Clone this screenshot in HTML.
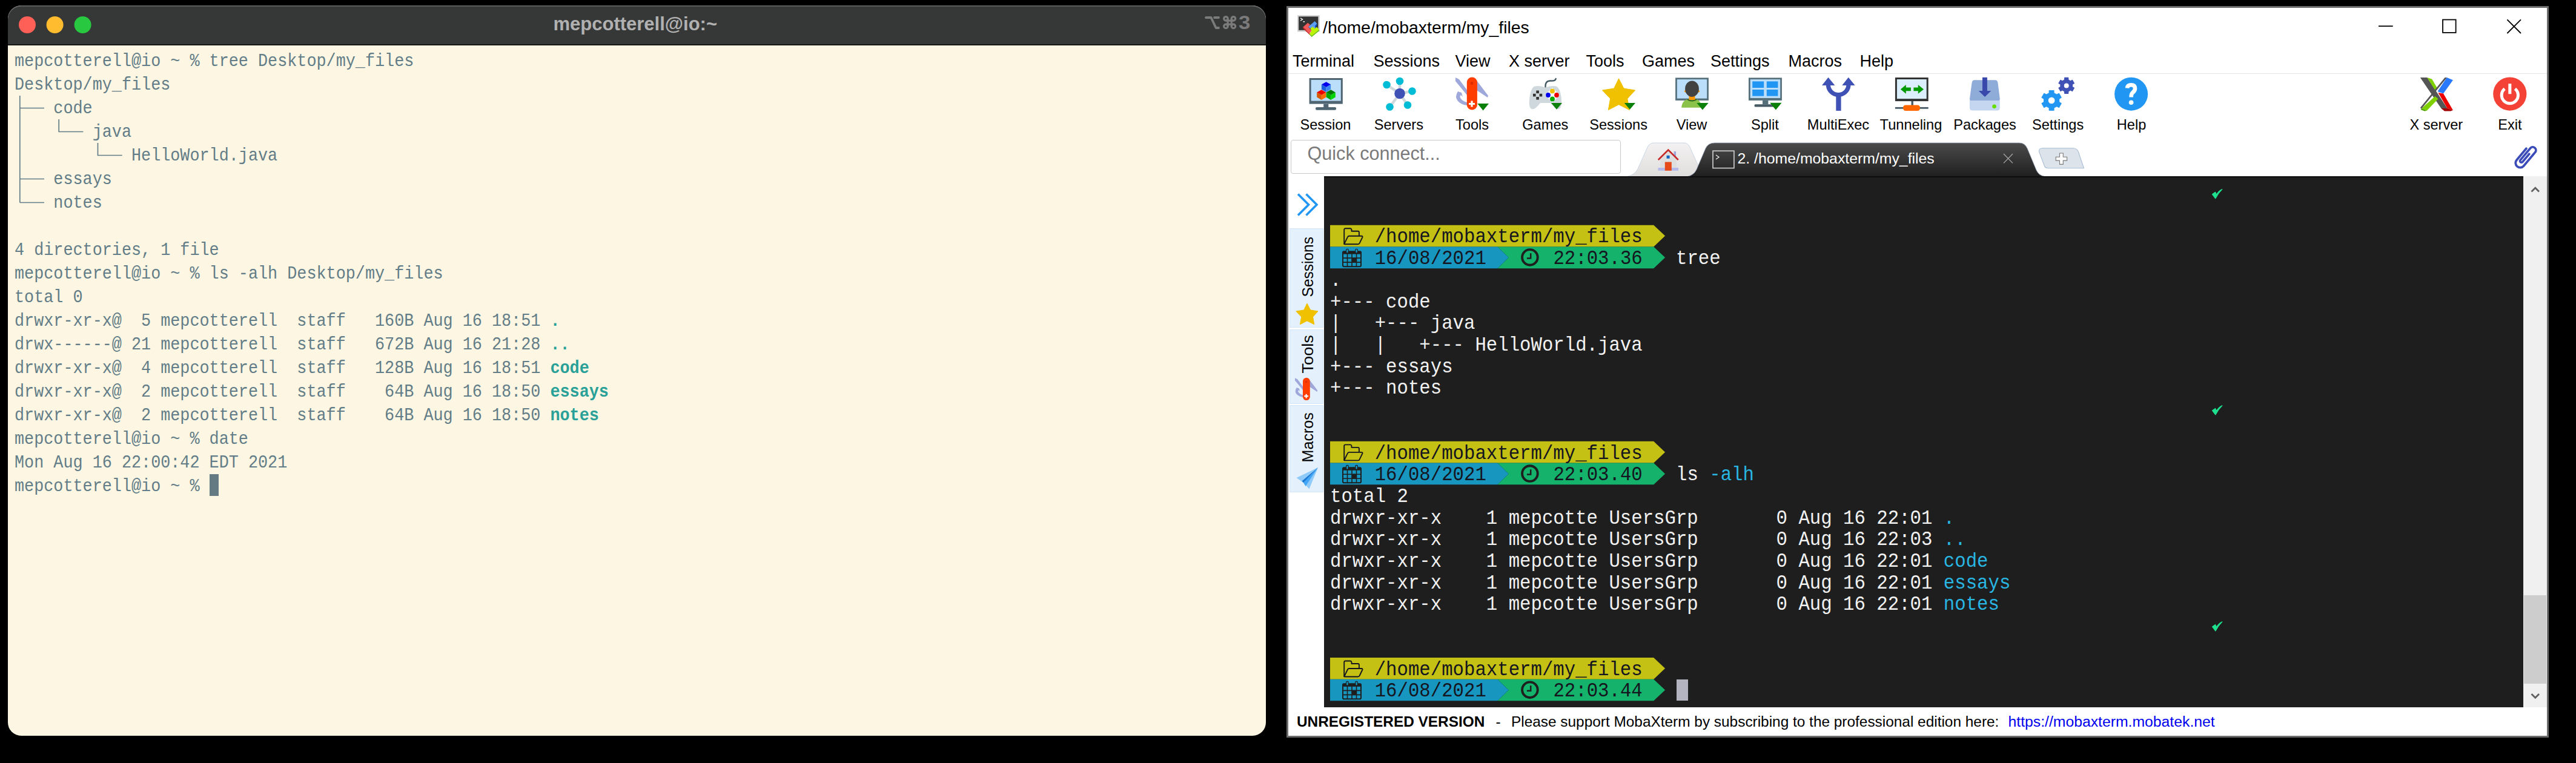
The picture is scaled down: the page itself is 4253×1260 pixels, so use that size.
<!DOCTYPE html><html><head><meta charset="utf-8"><style>html,body{margin:0;padding:0;background:#000;width:4253px;height:1260px;overflow:hidden;position:relative}b{font-weight:700}svg{overflow:visible}</style></head><body>
<div style="position:absolute;left:13px;top:9px;width:2077px;height:1206px;border-radius:22px;overflow:hidden;background:#fdf6e3"><div style="position:absolute;left:0;top:0;width:100%;height:64px;background:#363737"></div><div style="position:absolute;left:0;top:64px;width:100%;height:2px;background:#151515"></div><div style="position:absolute;left:0;top:0;width:100%;height:100px;border-radius:22px 22px 0 0;box-shadow:inset 0 1.6px 0.6px rgba(255,255,255,0.26)"></div></div>
<svg style="position:absolute;left:0;top:0" width="4253" height="1260" viewBox="0 0 4253 1260"><circle cx="45" cy="41" r="14" fill="#fe5f57"/><circle cx="90.6" cy="41" r="14" fill="#febc2e"/><circle cx="136.6" cy="41" r="14" fill="#28c840"/></svg>
<div style="position:absolute;left:913.50px;top:23.76px;font-family:'Liberation Sans', sans-serif;font-size:31.000px;line-height:31.000px;font-weight:700;color:#b1b1b1;white-space:pre;">mepcotterell@io:~</div>
<svg style="position:absolute;left:0;top:0" width="4253" height="1260" viewBox="0 0 4253 1260"><g fill="none" stroke="#7b7b7b" stroke-width="3.8" stroke-linecap="round" stroke-linejoin="round"><path d="M1991 29 H1999.5 L2007.5 46 H2012"/><path d="M2005 29 H2012"/></g><g fill="none" stroke="#7b7b7b" stroke-width="3.2"><path d="M2023.9 34.1 H2036.4 M2023.9 40.1 H2036.4 M2027.1 30.8 V43.4 M2033.2 30.8 V43.4"/><circle cx="2023.9" cy="30.8" r="3.25"/><circle cx="2036.4" cy="30.8" r="3.25"/><circle cx="2023.9" cy="43.4" r="3.25"/><circle cx="2036.4" cy="43.4" r="3.25"/></g></svg>
<div style="position:absolute;left:2044.50px;top:21.96px;font-family:'Liberation Sans', sans-serif;font-size:31.000px;line-height:31.000px;font-weight:700;color:#7b7b7b;white-space:pre;transform:scale(1.12,1.0);transform-origin:0 26.24px;">3</div>
<div style="position:absolute;left:24.00px;top:89.37px;font-family:'Liberation Mono', monospace;font-size:26.800px;line-height:26.800px;font-weight:400;color:#627d87;white-space:pre;transform:scale(1.0,1.1);transform-origin:0 20.53px;">mepcotterell@io ~ % tree Desktop/my_files</div>
<div style="position:absolute;left:24.00px;top:128.37px;font-family:'Liberation Mono', monospace;font-size:26.800px;line-height:26.800px;font-weight:400;color:#627d87;white-space:pre;transform:scale(1.0,1.1);transform-origin:0 20.53px;">Desktop/my_files</div>
<div style="position:absolute;left:24.00px;top:167.37px;font-family:'Liberation Mono', monospace;font-size:26.800px;line-height:26.800px;font-weight:400;color:#627d87;white-space:pre;transform:scale(1.0,1.1);transform-origin:0 20.53px;">    code</div>
<div style="position:absolute;left:24.00px;top:206.37px;font-family:'Liberation Mono', monospace;font-size:26.800px;line-height:26.800px;font-weight:400;color:#627d87;white-space:pre;transform:scale(1.0,1.1);transform-origin:0 20.53px;">        java</div>
<div style="position:absolute;left:24.00px;top:245.37px;font-family:'Liberation Mono', monospace;font-size:26.800px;line-height:26.800px;font-weight:400;color:#627d87;white-space:pre;transform:scale(1.0,1.1);transform-origin:0 20.53px;">            HelloWorld.java</div>
<div style="position:absolute;left:24.00px;top:284.37px;font-family:'Liberation Mono', monospace;font-size:26.800px;line-height:26.800px;font-weight:400;color:#627d87;white-space:pre;transform:scale(1.0,1.1);transform-origin:0 20.53px;">    essays</div>
<div style="position:absolute;left:24.00px;top:323.37px;font-family:'Liberation Mono', monospace;font-size:26.800px;line-height:26.800px;font-weight:400;color:#627d87;white-space:pre;transform:scale(1.0,1.1);transform-origin:0 20.53px;">    notes</div>
<div style="position:absolute;left:24.00px;top:401.37px;font-family:'Liberation Mono', monospace;font-size:26.800px;line-height:26.800px;font-weight:400;color:#627d87;white-space:pre;transform:scale(1.0,1.1);transform-origin:0 20.53px;">4 directories, 1 file</div>
<div style="position:absolute;left:24.00px;top:440.37px;font-family:'Liberation Mono', monospace;font-size:26.800px;line-height:26.800px;font-weight:400;color:#627d87;white-space:pre;transform:scale(1.0,1.1);transform-origin:0 20.53px;">mepcotterell@io ~ % ls -alh Desktop/my_files</div>
<div style="position:absolute;left:24.00px;top:479.37px;font-family:'Liberation Mono', monospace;font-size:26.800px;line-height:26.800px;font-weight:400;color:#627d87;white-space:pre;transform:scale(1.0,1.1);transform-origin:0 20.53px;">total 0</div>
<div style="position:absolute;left:24.00px;top:518.37px;font-family:'Liberation Mono', monospace;font-size:26.800px;line-height:26.800px;font-weight:400;color:#627d87;white-space:pre;transform:scale(1.0,1.1);transform-origin:0 20.53px;">drwxr-xr-x@  5 mepcotterell  staff   160B Aug 16 18:51 <b style="color:#2aa198">.</b></div>
<div style="position:absolute;left:24.00px;top:557.37px;font-family:'Liberation Mono', monospace;font-size:26.800px;line-height:26.800px;font-weight:400;color:#627d87;white-space:pre;transform:scale(1.0,1.1);transform-origin:0 20.53px;">drwx------@ 21 mepcotterell  staff   672B Aug 16 21:28 <b style="color:#2aa198">..</b></div>
<div style="position:absolute;left:24.00px;top:596.37px;font-family:'Liberation Mono', monospace;font-size:26.800px;line-height:26.800px;font-weight:400;color:#627d87;white-space:pre;transform:scale(1.0,1.1);transform-origin:0 20.53px;">drwxr-xr-x@  4 mepcotterell  staff   128B Aug 16 18:51 <b style="color:#2aa198">code</b></div>
<div style="position:absolute;left:24.00px;top:635.37px;font-family:'Liberation Mono', monospace;font-size:26.800px;line-height:26.800px;font-weight:400;color:#627d87;white-space:pre;transform:scale(1.0,1.1);transform-origin:0 20.53px;">drwxr-xr-x@  2 mepcotterell  staff    64B Aug 16 18:50 <b style="color:#2aa198">essays</b></div>
<div style="position:absolute;left:24.00px;top:674.37px;font-family:'Liberation Mono', monospace;font-size:26.800px;line-height:26.800px;font-weight:400;color:#627d87;white-space:pre;transform:scale(1.0,1.1);transform-origin:0 20.53px;">drwxr-xr-x@  2 mepcotterell  staff    64B Aug 16 18:50 <b style="color:#2aa198">notes</b></div>
<div style="position:absolute;left:24.00px;top:713.37px;font-family:'Liberation Mono', monospace;font-size:26.800px;line-height:26.800px;font-weight:400;color:#627d87;white-space:pre;transform:scale(1.0,1.1);transform-origin:0 20.53px;">mepcotterell@io ~ % date</div>
<div style="position:absolute;left:24.00px;top:752.37px;font-family:'Liberation Mono', monospace;font-size:26.800px;line-height:26.800px;font-weight:400;color:#627d87;white-space:pre;transform:scale(1.0,1.1);transform-origin:0 20.53px;">Mon Aug 16 22:00:42 EDT 2021</div>
<div style="position:absolute;left:24.00px;top:791.37px;font-family:'Liberation Mono', monospace;font-size:26.800px;line-height:26.800px;font-weight:400;color:#627d87;white-space:pre;transform:scale(1.0,1.1);transform-origin:0 20.53px;">mepcotterell@io ~ % </div>
<svg style="position:absolute;left:0;top:0" width="4253" height="1260" viewBox="0 0 4253 1260"><path d="M32.8 157.9 V334.5 M32.8 178.5 H73.0 M32.8 295.5 H73.0 M32.8 334.5 H73.0 M97.2 196.9 V217.5 H137.4 M161.5 235.9 V256.5 H201.7" stroke="#627d87" stroke-width="1.7" fill="none"/></svg>
<div style="position:absolute;left:346.00px;top:783.40px;width:14.50px;height:35.70px;background:#657b83;"></div>
<div style="position:absolute;left:2124px;top:10px;width:2084px;height:1208px;box-sizing:border-box;border:3px solid #6c6c6c;background:#fff"></div>
<svg style="position:absolute;left:0;top:0" width="4253" height="1260" viewBox="0 0 4253 1260"><rect x="2142.1" y="25.2" width="36.6" height="27.2" fill="#cdcdcd"/><rect x="2144.2" y="27.4" width="32.1" height="22.4" fill="#333"/><path d="M2147 29.8 L2150.5 32 L2147 34.2" stroke="#fff" stroke-width="1.3" fill="none"/><rect x="2151.5" y="35" width="2.5" height="1.6" fill="#fff"/><path d="M2151.3 44.8 L2159.2 37.7 L2163 41 L2160 44.5 L2165.4 50.5 L2162.2 55.4 Z" fill="#f25a5a"/><path d="M2151.3 44.8 L2162.2 55.4 L2162.2 57.5 L2151.3 47 Z" fill="#c81e1e"/><path d="M2160 44.3 L2170.7 35 L2174.5 39 L2171 43 L2172 46 L2170 47.5 L2166 45 L2163 47 Z" fill="#5c9ef5"/><path d="M2171 43 L2174.5 39 L2174.5 41 L2172 46 Z" fill="#0050e0"/><path d="M2163.4 46.8 L2167.5 44 L2170.5 47.3 L2174 44.5 L2177.8 48.9 L2165.7 59 L2162.2 55.4 L2165.4 51.5 Z" fill="#bdf200"/><path d="M2165.7 59 L2177.8 48.9 L2177.8 51 L2165.7 61 L2162.2 57.5 L2162.2 55.4 Z" fill="#66c400"/></svg>
<div style="position:absolute;left:2184.00px;top:30.66px;font-family:'Liberation Sans', sans-serif;font-size:28.400px;line-height:28.400px;font-weight:400;color:#000;white-space:pre;">/home/mobaxterm/my_files</div>
<svg style="position:absolute;left:0;top:0" width="4253" height="1260" viewBox="0 0 4253 1260"><g stroke="#000" fill="none" stroke-width="1.8"><path d="M3927 43.2 H3950.7"/><rect x="4033" y="32.5" width="21.6" height="21.4"/><path d="M4139.4 32.4 L4162 55 M4162 32.4 L4139.4 55"/></g></svg>
<div style="position:absolute;left:2134.00px;top:87.74px;font-family:'Liberation Sans', sans-serif;font-size:27.000px;line-height:27.000px;font-weight:400;color:#000;white-space:pre;">Terminal</div>
<div style="position:absolute;left:2267.50px;top:87.74px;font-family:'Liberation Sans', sans-serif;font-size:27.000px;line-height:27.000px;font-weight:400;color:#000;white-space:pre;">Sessions</div>
<div style="position:absolute;left:2402.50px;top:87.74px;font-family:'Liberation Sans', sans-serif;font-size:27.000px;line-height:27.000px;font-weight:400;color:#000;white-space:pre;">View</div>
<div style="position:absolute;left:2491.00px;top:87.74px;font-family:'Liberation Sans', sans-serif;font-size:27.000px;line-height:27.000px;font-weight:400;color:#000;white-space:pre;">X server</div>
<div style="position:absolute;left:2618.50px;top:87.74px;font-family:'Liberation Sans', sans-serif;font-size:27.000px;line-height:27.000px;font-weight:400;color:#000;white-space:pre;">Tools</div>
<div style="position:absolute;left:2711.00px;top:87.74px;font-family:'Liberation Sans', sans-serif;font-size:27.000px;line-height:27.000px;font-weight:400;color:#000;white-space:pre;">Games</div>
<div style="position:absolute;left:2824.00px;top:87.74px;font-family:'Liberation Sans', sans-serif;font-size:27.000px;line-height:27.000px;font-weight:400;color:#000;white-space:pre;">Settings</div>
<div style="position:absolute;left:2952.50px;top:87.74px;font-family:'Liberation Sans', sans-serif;font-size:27.000px;line-height:27.000px;font-weight:400;color:#000;white-space:pre;">Macros</div>
<div style="position:absolute;left:3070.50px;top:87.74px;font-family:'Liberation Sans', sans-serif;font-size:27.000px;line-height:27.000px;font-weight:400;color:#000;white-space:pre;">Help</div>
<div style="position:absolute;left:2127.00px;top:120.80px;width:2078.00px;height:1.20px;background:#e6e6e6;"></div>
<svg style="position:absolute;left:0;top:0" width="4253" height="1260" viewBox="0 0 4253 1260"><rect x="2161.6" y="129" width="55.2" height="42.6" fill="#4f6672"/><rect x="2164.6" y="132" width="49.2" height="34.6" fill="#bbdefb"/><rect x="2185.2" y="171.6" width="8.1" height="6" fill="#4f6672"/><rect x="2172" y="177" width="34" height="4.8" rx="2" fill="#4f6672"/><path d="M2189.5 135.184 L2197.1 139.592 L2189.5 144.0 L2181.9 139.592 Z" fill="#0000ee"/><path d="M2181.9 139.592 L2189.5 144.0 L2189.5 151.98 L2181.9 147.572 Z" fill="#1a5fe0"/><path d="M2197.1 139.592 L2189.5 144.0 L2189.5 151.98 L2197.1 147.572 Z" fill="#3d88f5"/><path d="M2181.8 148.184 L2189.4 152.592 L2181.8 157.0 L2174.2000000000003 152.592 Z" fill="#ee0000"/><path d="M2174.2000000000003 152.592 L2181.8 157.0 L2181.8 164.98 L2174.2000000000003 160.572 Z" fill="#d85a00"/><path d="M2189.4 152.592 L2181.8 157.0 L2181.8 164.98 L2189.4 160.572 Z" fill="#ff6d00"/><path d="M2197.2 148.184 L2204.7999999999997 152.592 L2197.2 157.0 L2189.6 152.592 Z" fill="#007a00"/><path d="M2189.6 152.592 L2197.2 157.0 L2197.2 164.98 L2189.6 160.572 Z" fill="#00a800"/><path d="M2204.7999999999997 152.592 L2197.2 157.0 L2197.2 164.98 L2204.7999999999997 160.572 Z" fill="#00d600"/><g stroke="#cfd8dc" stroke-width="4.5"><line x1="2311" y1="154.5" x2="2289.5" y2="140"/><line x1="2311" y1="154.5" x2="2311" y2="134"/><line x1="2311" y1="154.5" x2="2331.5" y2="150.5"/><line x1="2311" y1="154.5" x2="2294.5" y2="176.5"/><line x1="2311" y1="154.5" x2="2324" y2="173.5"/></g><circle cx="2311" cy="154.5" r="8.8" fill="#3f51b5"/><circle cx="2289.5" cy="140" r="6.3" fill="#00bcd4"/><circle cx="2311" cy="134" r="6.3" fill="#00bcd4"/><circle cx="2331.5" cy="150.5" r="6.3" fill="#00bcd4"/><circle cx="2294.5" cy="176.5" r="6.3" fill="#00bcd4"/><circle cx="2324" cy="173.5" r="6.3" fill="#00bcd4"/><path d="M2403.00 128.00 L2409.00 131.00 L2423.00 150.00 L2422.00 157.00 L2403.00 134.00 Z" fill="#9fa8da"/><path d="M2438.00 133.00 L2457.00 158.00 L2456.00 161.00 L2438.00 149.00 Z" fill="#9fa8da"/><path d="M2407.00 151.00 Q2401.00 160.00 2407.00 167.00 Q2413.00 173.00 2422.00 174.00 L2422.00 169.00 Q2415.00 167.00 2412.00 163.00 Q2409.00 159.00 2412.00 157.00 L2415.00 160.00 L2413.00 153.00 Z" fill="#9fa8da"/><rect x="2421.80" y="127.50" width="17.10" height="54.10" rx="8.50" fill="#ff3d00"/><circle cx="2430.00" cy="137.50" r="2.50" fill="#dd2c00"/><path d="M2430.00 167.00 V" /><path d="M2428.4 166.5 H2431.6 V169.9 H2435.0 V173.1 H2431.6 V176.5 H2428.4 V173.1 H2425.0 V169.9 H2428.4 Z" fill="#fff"/><path d="M2439.3 171 H2458 L2448.65 182.6 Z" fill="#0a7f0a"/><path d="M2551.5 144 Q2551 133 2560 133.5 Q2568 134 2568.7 130" stroke="#455a64" stroke-width="2.4" fill="none" stroke-linecap="round"/><path d="M2534 142.5 Q2541 141 2551.5 144.5 Q2562 141 2569 142.5 Q2575 144 2577.5 160 Q2579.5 178 2574 180 Q2569 182 2560 170 L2543 170 Q2534 182 2529 180 Q2523 178 2525.5 160 Q2528 144 2534 142.5 Z" fill="#cfd8dc"/><g fill="#333"><rect x="2536.3" y="149.5" width="4.6" height="4.6"/><rect x="2536.3" y="160" width="4.6" height="4.6"/><rect x="2531" y="154.8" width="4.6" height="4.6"/><rect x="2541.6" y="154.8" width="4.6" height="4.6"/></g><path d="M2563 145 L2575 157 L2563 169 L2551 157 Z" fill="#fff"/><circle cx="2563" cy="150.4" r="3.9" fill="#f0c000"/><circle cx="2556" cy="157" r="3.9" fill="#0000ee"/><circle cx="2570" cy="157" r="3.9" fill="#ee0000"/><circle cx="2563" cy="163.5" r="3.9" fill="#00aa00"/><path d="M2561 170 H2579 L2570.0 180.8 Z" fill="#0a7f0a"/><path d="M2672.60 129.80 L2680.90 146.00 L2699.60 149.00 L2686.80 162.90 L2690.30 181.60 L2672.60 172.70 L2655.30 181.60 L2658.70 162.90 L2645.50 149.00 L2664.70 146.00 Z" fill="#efc100" stroke="#efc100" stroke-width="1" stroke-linejoin="round"/><path d="M2681.7 170.1 H2700 L2690.85 180.8 Z" fill="#0a7f0a"/><rect x="2766.1" y="128.4" width="54.8" height="37.5" fill="#546e7a"/><rect x="2768.8" y="131.1" width="49.4" height="31.5" fill="#bbdefb"/><path d="M2776.2 177.8 Q2777 165 2788 163.7 H2799 Q2808.5 165 2809.4 177.8 Z" fill="#8bc34a"/><path d="M2786 164.2 Q2793.5 169 2801 164.2" stroke="#33691e" stroke-width="2" fill="none"/><rect x="2788.5" y="158" width="10" height="7" fill="#ff9800"/><circle cx="2782.6" cy="150.8" r="1.8" fill="#ff9800"/><circle cx="2804.4" cy="150.8" r="1.8" fill="#ff9800"/><ellipse cx="2793.5" cy="146.7" rx="11.4" ry="13.2" fill="#424242"/><path d="M2801.3 170.1 H2820.6 L2810.95 181.6 Z" fill="#0a7f0a"/><rect x="2887" y="128.4" width="54.9" height="37.5" fill="#546e7a"/><rect x="2889.7" y="131.1" width="49.5" height="30.8" fill="#bbdefb"/><g fill="#2196f3"><rect x="2893.2" y="134.4" width="19" height="10.6"/><rect x="2916.8" y="134.4" width="18.6" height="10.6"/><rect x="2893.2" y="148" width="19" height="10.6"/><rect x="2916.8" y="148" width="18.6" height="10.6"/></g><rect x="2910" y="165.9" width="9.4" height="6.4" fill="#546e7a"/><rect x="2896.6" y="172.3" width="36" height="4.2" rx="1.5" fill="#455a64"/><path d="M2922.2 169.7 H2941.5 L2931.85 181.6 Z" fill="#0a7f0a"/><path d="M3018.5 140.9 V142 A16.8 16.8 0 0 0 3051.8 142 V140.9" stroke="#3f51b5" stroke-width="7.2" fill="none"/><rect x="3031.3" y="155" width="8.3" height="27.9" fill="#3f51b5"/><path d="M3018.5 127.8 L3029.4 140.9 H3008.1 Z M3051.8 127.8 L3062.6 140.9 H3041.3 Z" fill="#3f51b5"/><rect x="3128.9" y="128" width="54.8" height="39.1" fill="#333"/><rect x="3131.9" y="131" width="48.8" height="32.1" fill="#dbeefc"/><path d="M3137.9 147.4 L3146.8 140 V144.6 H3154.9 V150.3 H3146.8 V154.8 Z" fill="#009900"/><path d="M3176 147.4 L3166.8 140 V144.6 H3159.4 V150.3 H3166.8 V154.8 Z" fill="#009900"/><rect x="3155.5" y="167" width="3.4" height="7" fill="#455a64"/><rect x="3128.9" y="176.9" width="54.8" height="2.8" fill="#455a64"/><rect x="3142" y="173.5" width="28" height="9.4" rx="4.2" fill="#ff6600"/><path d="M3260 132.2 H3294 Q3298 132.2 3298.5 137 L3301.8 163 Q3302 167.1 3298 167.1 H3255.7 Q3251.7 167.1 3252 163 L3255.5 137 Q3256 132.2 3260 132.2 Z" fill="#8fabd8"/><path d="M3251.9 166 H3301.8 V178 Q3301.8 182.6 3297 182.6 H3256.7 Q3251.9 182.6 3251.9 178 Z" fill="#c5d7f0"/><circle cx="3292.6" cy="175.7" r="3.3" fill="#66dd00"/><rect x="3273" y="127.8" width="7.9" height="23" fill="#3949ab"/><path d="M3266.8 150 H3287.3 L3277 159.9 Z" fill="#3949ab"/><path d="M3383.14 153.73 L3383.26 149.54 L3390.94 149.54 L3391.06 153.73 L3395.66 156.39 L3399.35 154.40 L3403.18 161.04 L3399.62 163.24 L3399.62 168.56 L3403.18 170.76 L3399.35 177.40 L3395.66 175.41 L3391.06 178.07 L3390.94 182.26 L3383.26 182.26 L3383.14 178.07 L3378.54 175.41 L3374.85 177.40 L3371.02 170.76 L3374.58 168.56 L3374.58 163.24 L3371.02 161.04 L3374.85 154.40 L3378.54 156.39 Z M3393.1 165.9 A6.0 6.0 0 1 0 3381.1 165.9 A6.0 6.0 0 1 0 3393.1 165.9 Z" fill="#2196f3" fill-rule="evenodd" stroke="#2196f3" stroke-width="1.2" stroke-linejoin="round"/><path d="M3408.61 131.89 L3408.66 128.45 L3414.74 128.45 L3414.79 131.89 L3418.39 133.97 L3421.40 132.30 L3424.43 137.56 L3421.48 139.32 L3421.48 143.48 L3424.43 145.24 L3421.40 150.50 L3418.39 148.83 L3414.79 150.91 L3414.74 154.35 L3408.66 154.35 L3408.61 150.91 L3405.01 148.83 L3402.00 150.50 L3398.97 145.24 L3401.92 143.48 L3401.92 139.32 L3398.97 137.56 L3402.00 132.30 L3405.01 133.97 Z M3416.2999999999997 141.4 A4.6 4.6 0 1 0 3407.1 141.4 A4.6 4.6 0 1 0 3416.2999999999997 141.4 Z" fill="#3f51b5" fill-rule="evenodd" stroke="#3f51b5" stroke-width="1.2" stroke-linejoin="round"/><circle cx="3518.6" cy="155.2" r="27.5" fill="#2196f3"/><path d="M3512 145.5 Q3512.5 140.2 3518.6 140.2 Q3525 140.2 3525 146 Q3525 150 3521 153 Q3518.6 155 3518.6 160.5" stroke="#fff" stroke-width="6.6" fill="none"/><circle cx="3518.6" cy="169.3" r="3.8" fill="#fff"/><path d="M3995.8 127.9 H4007.4 L4040.5 179.1 H4030.4 Z" fill="#555"/><path d="M4007.4 127.9 L4015.3 130.8 L4024.2 146 L4021.1 150.3 Z" fill="#7ed000"/><path d="M4039.8 127.9 L4049.9 132.3 L4034 154.6 L4024.5 151 Z" fill="#2979ff"/><path d="M4025.4 153.1 L4034 154.6 L4049.9 182 L4040.5 179.1 Z" fill="#ee0000"/><path d="M4030.4 179.1 H4040.5 L4049.9 182 L4046 183.5 H4036 Z" fill="#a00000"/><path d="M4020.4 158.9 L4025.4 163.2 L4006.7 182.7 L3998 179 Z" fill="#7ed000"/><path d="M3998 179 L4006.7 182.7 L4003 183.5 L3996.5 181 Z" fill="#4f9e00"/><path d="M4036.5 127.9 H4040 L3998 179.5 L3995.8 178 Z" fill="#555"/><circle cx="4143.8" cy="155.1" r="27.6" fill="#f44336"/><path d="M4135.2 146.6 A13.6 13.6 0 1 0 4152.4 146.6" stroke="#fff" stroke-width="5" fill="none"/><rect x="4141.3" y="138.2" width="5" height="17" fill="#fff"/></svg>
<div style="position:absolute;left:1988.50px;width:400px;text-align:center;top:194.92px;font-family:'Liberation Sans', sans-serif;font-size:23.600px;line-height:23.600px;font-weight:400;color:#000;white-space:pre;">Session</div>
<div style="position:absolute;left:2109.40px;width:400px;text-align:center;top:194.92px;font-family:'Liberation Sans', sans-serif;font-size:23.600px;line-height:23.600px;font-weight:400;color:#000;white-space:pre;">Servers</div>
<div style="position:absolute;left:2230.60px;width:400px;text-align:center;top:194.92px;font-family:'Liberation Sans', sans-serif;font-size:23.600px;line-height:23.600px;font-weight:400;color:#000;white-space:pre;">Tools</div>
<div style="position:absolute;left:2351.30px;width:400px;text-align:center;top:194.92px;font-family:'Liberation Sans', sans-serif;font-size:23.600px;line-height:23.600px;font-weight:400;color:#000;white-space:pre;">Games</div>
<div style="position:absolute;left:2472.10px;width:400px;text-align:center;top:194.92px;font-family:'Liberation Sans', sans-serif;font-size:23.600px;line-height:23.600px;font-weight:400;color:#000;white-space:pre;">Sessions</div>
<div style="position:absolute;left:2593.00px;width:400px;text-align:center;top:194.92px;font-family:'Liberation Sans', sans-serif;font-size:23.600px;line-height:23.600px;font-weight:400;color:#000;white-space:pre;">View</div>
<div style="position:absolute;left:2713.90px;width:400px;text-align:center;top:194.92px;font-family:'Liberation Sans', sans-serif;font-size:23.600px;line-height:23.600px;font-weight:400;color:#000;white-space:pre;">Split</div>
<div style="position:absolute;left:2835.00px;width:400px;text-align:center;top:194.92px;font-family:'Liberation Sans', sans-serif;font-size:23.600px;line-height:23.600px;font-weight:400;color:#000;white-space:pre;">MultiExec</div>
<div style="position:absolute;left:2955.00px;width:400px;text-align:center;top:194.92px;font-family:'Liberation Sans', sans-serif;font-size:23.600px;line-height:23.600px;font-weight:400;color:#000;white-space:pre;">Tunneling</div>
<div style="position:absolute;left:3077.00px;width:400px;text-align:center;top:194.92px;font-family:'Liberation Sans', sans-serif;font-size:23.600px;line-height:23.600px;font-weight:400;color:#000;white-space:pre;">Packages</div>
<div style="position:absolute;left:3197.60px;width:400px;text-align:center;top:194.92px;font-family:'Liberation Sans', sans-serif;font-size:23.600px;line-height:23.600px;font-weight:400;color:#000;white-space:pre;">Settings</div>
<div style="position:absolute;left:3319.00px;width:400px;text-align:center;top:194.92px;font-family:'Liberation Sans', sans-serif;font-size:23.600px;line-height:23.600px;font-weight:400;color:#000;white-space:pre;">Help</div>
<div style="position:absolute;left:3822.30px;width:400px;text-align:center;top:194.92px;font-family:'Liberation Sans', sans-serif;font-size:23.600px;line-height:23.600px;font-weight:400;color:#000;white-space:pre;">X server</div>
<div style="position:absolute;left:3943.90px;width:400px;text-align:center;top:194.92px;font-family:'Liberation Sans', sans-serif;font-size:23.600px;line-height:23.600px;font-weight:400;color:#000;white-space:pre;">Exit</div>
<div style="position:absolute;left:2130.5px;top:230.5px;width:545px;height:56.8px;box-sizing:border-box;border:1.5px solid #c9c9c9;border-radius:4px;background:#fff"></div>
<div style="position:absolute;left:2158.50px;top:237.70px;font-family:'Liberation Sans', sans-serif;font-size:30.600px;line-height:30.600px;font-weight:400;color:#7a7a7a;white-space:pre;">Quick connect...</div>
<svg style="position:absolute;left:0;top:0" width="4253" height="1260" viewBox="0 0 4253 1260"><defs><linearGradient id="gh" x1="0" y1="0" x2="0" y2="1"><stop offset="0" stop-color="#f3f1f1"/><stop offset="1" stop-color="#e0dddd"/></linearGradient><linearGradient id="gd" x1="0" y1="0" x2="0" y2="1"><stop offset="0" stop-color="#4b4b4b"/><stop offset="1" stop-color="#1f1f1f"/></linearGradient></defs><path d="M2686 291.5 Q2699 289 2704 279 L2720 243 Q2723.5 236 2731 236 L2780 236 Q2787 236 2790 243 L2812 291.5 Z" fill="url(#gh)" stroke="#c8d6e4" stroke-width="1"/><path d="M2786 291.5 Q2797 289 2801 280 L2816 245 Q2820 236 2831 236 L3334 236 Q3343 236 3347 245 L3362 281 Q3366 290 3376 291.5 Z" fill="url(#gd)" stroke="#8a9bb0" stroke-width="0.8"/><rect x="2737.5" y="277" width="33.5" height="4.8" fill="#b3b9e8"/><path d="M2741 262 L2754.3 249 L2768 262 V277 H2741 Z" fill="#dedede"/><rect x="2763.5" y="250" width="3.6" height="8" fill="#9fa8da"/><path d="M2737.8 264 L2754.3 247.5 L2770.8 264" stroke="#c62828" stroke-width="2.6" fill="none"/><rect x="2751.6" y="256.8" width="5" height="5" fill="#1565c0"/><rect x="2748.8" y="267.5" width="11" height="14.3" fill="#e64a19"/><rect x="2828" y="249.2" width="34.9" height="28.4" fill="none" stroke="#c4c4c4" stroke-width="1.8"/><path d="M2833 256 L2838 259.5 L2833 263" stroke="#eee" stroke-width="1.3" fill="none"/></svg>
<div style="position:absolute;left:2868.50px;top:249.51px;font-family:'Liberation Sans', sans-serif;font-size:24.800px;line-height:24.800px;font-weight:400;color:#fff;white-space:pre;">2. /home/mobaxterm/my_files</div>
<svg style="position:absolute;left:0;top:0" width="4253" height="1260" viewBox="0 0 4253 1260"><path d="M3308 254 L3323 269.4 M3323 254 L3308 269.4" stroke="#a8a8a8" stroke-width="1.3"/><path d="M3372 244.8 H3423 Q3429 244.8 3431.5 251 L3440.5 277.8 H3382 Q3376.5 277.8 3375 273 L3366.5 250.5 Q3366 244.8 3372 244.8 Z" fill="#dde3eb" stroke="#a9bdd3" stroke-width="1.1"/><path d="M3400.5 253 H3406.3 V259.3 H3412.6 V265.1 H3406.3 V271.4 H3400.5 V265.1 H3394.2 V259.3 H3400.5 Z" fill="#fdfdfd" stroke="#7a7a7a" stroke-width="1.1"/><g transform="translate(4169.4 258.9) rotate(40) scale(0.95) translate(-2 0)"><path d="M-6 -12 V14 A8 8 0 0 0 10 14 V-17 A5.5 5.5 0 0 0 -1 -17 V10 A2.5 2.5 0 0 0 4 10 V-8" stroke="#3b4cb8" stroke-width="3.9" fill="none" stroke-linecap="round"/></g><path d="M2143 320.5 L2160.5 338 L2143 355.5 M2156.5 320.5 L2174 338 L2156.5 355.5" stroke="#2196f3" stroke-width="3.6" fill="none"/></svg>
<div style="position:absolute;left:2129px;top:376.6px;width:56px;height:164.9px;box-sizing:border-box;background:#e4f1fd;border:1px solid #d2e6f8"></div>
<div style="position:absolute;left:2129px;top:543.5px;width:56px;height:123.9px;box-sizing:border-box;background:#e4f1fd;border:1px solid #d2e6f8"></div>
<div style="position:absolute;left:2129px;top:669px;width:56px;height:144.3px;box-sizing:border-box;background:#e4f1fd;border:1px solid #d2e6f8"></div>
<div style="position:absolute;left:2168.40px;top:467.87px;font-family:'Liberation Sans', sans-serif;font-size:26.5px;line-height:26.5px;color:#000;white-space:pre;transform-origin:0 22.43px;transform:rotate(-90deg) scaleX(0.9234713781996589)">Sessions</div>
<div style="position:absolute;left:2168.40px;top:594.17px;font-family:'Liberation Sans', sans-serif;font-size:26.5px;line-height:26.5px;color:#000;white-space:pre;transform-origin:0 22.43px;transform:rotate(-90deg) scaleX(1.0203466632032607)">Tools</div>
<div style="position:absolute;left:2168.40px;top:740.57px;font-family:'Liberation Sans', sans-serif;font-size:26.5px;line-height:26.5px;color:#000;white-space:pre;transform-origin:0 22.43px;transform:rotate(-90deg) scaleX(0.9455099293427811)">Macros</div>
<svg style="position:absolute;left:0;top:0" width="4253" height="1260" viewBox="0 0 4253 1260"><path d="M2158.00 501.11 L2163.56 511.96 L2176.09 513.97 L2167.51 523.28 L2169.86 535.81 L2158.00 529.85 L2146.41 535.81 L2148.69 523.28 L2139.84 513.97 L2152.71 511.96 Z" fill="#efc100" stroke="#efc100" stroke-width="1" stroke-linejoin="round"/><path d="M2138.02 624.14 L2142.16 626.21 L2151.82 639.32 L2151.13 644.15 L2138.02 628.28 Z" fill="#9fa8da"/><path d="M2162.17 627.59 L2175.28 644.84 L2174.59 646.91 L2162.17 638.63 Z" fill="#9fa8da"/><path d="M2140.78 640.01 Q2136.64 646.22 2140.78 651.05 Q2144.92 655.19 2151.13 655.88 L2151.13 652.43 Q2146.30 651.05 2144.23 648.29 Q2142.16 645.53 2144.23 644.15 L2146.30 646.22 L2144.92 641.39 Z" fill="#9fa8da"/><rect x="2150.99" y="623.79" width="11.80" height="37.33" rx="5.86" fill="#ff3d00"/><circle cx="2156.65" cy="630.70" r="1.72" fill="#dd2c00"/><path d="M2156.65 651.05 V" /><path d="M2155.5460000000003 650.7049999999999 H2157.754 V653.0509999999999 H2160.1 V655.259 H2157.754 V657.605 H2155.5460000000003 V655.259 H2153.2000000000003 V653.0509999999999 H2155.5460000000003 Z" fill="#fff"/><path d="M2140.5 789 L2176 772 L2161.5 807.4 L2152 797 Z" fill="#90caf9"/><path d="M2152 797 L2176 772 L2155.5 803 Z" fill="#42a5f5"/><path d="M2152 797 L2176 772 L2149.5 794.5 Z" fill="#1976d2"/></svg>
<div style="position:absolute;left:2186.40px;top:291.00px;width:1979.30px;height:877.20px;background:#1e1e1e;"></div>
<div style="position:absolute;left:2186.40px;top:291.00px;width:1979.30px;height:1.60px;background:#0d0d0d;"></div>
<div style="position:absolute;left:4165.70px;top:291.00px;width:39.30px;height:877.20px;background:#f0f0f0;"></div>
<div style="position:absolute;left:4167.00px;top:983.00px;width:36.70px;height:146.00px;background:#cdcdcd;"></div>
<svg style="position:absolute;left:0;top:0" width="4253" height="1260" viewBox="0 0 4253 1260"><path d="M4179.5 316.5 L4185.8 310.2 L4192 316.5" stroke="#606060" stroke-width="2.8" fill="none"/><path d="M4179.5 1146 L4185.8 1152.3 L4192 1146" stroke="#606060" stroke-width="2.8" fill="none"/><path d="M3652.5 320.8 L3657.5 317.3 L3659.5 321.3 Q3663 315.3 3668.8 312.6 Q3662 319.3 3657.8 327.8 Z" fill="#1ee08e" stroke="#1ee08e" stroke-width="1.2" stroke-linejoin="round"/><path d="M3652.5 677.9000000000001 L3657.5 674.4000000000001 L3659.5 678.4000000000001 Q3663 672.4000000000001 3668.8 669.7 Q3662 676.4000000000001 3657.8 684.9000000000001 Z" fill="#1ee08e" stroke="#1ee08e" stroke-width="1.2" stroke-linejoin="round"/><path d="M3652.5 1035.0 L3657.5 1031.5 L3659.5 1035.5 Q3663 1029.5 3668.8 1026.8 Q3662 1033.5 3657.8 1042.0 Z" fill="#1ee08e" stroke="#1ee08e" stroke-width="1.2" stroke-linejoin="round"/><path d="M2196 371.72 H2730.1800000000003 L2749.1 389.57500000000005 L2730.1800000000003 407.43 H2196 Z" fill="#c4c014"/><path d="M2472.3 407.43 H2730.1800000000003 L2749.1 425.28499999999997 L2730.1800000000003 443.14 H2472.3 L2490.7200000000003 425.28499999999997 Z" fill="#14b26b"/><path d="M2196 407.43 H2472.3 L2490.7200000000003 425.28499999999997 L2472.3 443.14 H2196 Z" fill="#1796c0"/><g transform="translate(2217 376.32000000000005)" stroke="#15151f" stroke-width="1.9" fill="none" stroke-linejoin="round"><path d="M2.2 26.6 V3 Q2.2 1 4.2 1 H12.5 Q14 1 14.5 3 V5.5 H25 Q26.9 5.5 26.9 7.5 V13.5"/><path d="M2.2 26.8 L8 15 Q8.6 13.5 10.5 13.5 H31 Q33 13.5 32.4 15.5 L27.5 25.5 Q27 27 25 27 H3.5 Z"/></g><g transform="translate(2216 410.13)"><rect x="1" y="5" width="30" height="25" rx="1.8" fill="none" stroke="#1e1e1e" stroke-width="2"/><rect x="1" y="5" width="30" height="4.5" fill="#1e1e1e"/><path d="M8.5 9 V30 M16 9 V30 M23.5 9 V30 M1 16 H31 M1 23 H31" stroke="#1e1e1e" stroke-width="1.6"/><rect x="6" y="0.5" width="4.8" height="8" rx="2" fill="#1e1e1e"/><rect x="21.2" y="0.5" width="4.8" height="8" rx="2" fill="#1e1e1e"/><rect x="7.2" y="1.7" width="2.4" height="5.5" rx="1" fill="#1796c0"/><rect x="22.4" y="1.7" width="2.4" height="5.5" rx="1" fill="#1796c0"/><circle cx="19.6" cy="19.3" r="4.0" fill="#1e1e1e"/></g><g transform="translate(2525.9 424.93)"><circle r="12.8" fill="none" stroke="#1e1e1e" stroke-width="3.9"/><path d="M1.3 -6.8 V1.5 H-5" stroke="#1e1e1e" stroke-width="2.5" fill="none"/></g></svg>
<div style="position:absolute;left:2269.68px;top:377.40px;font-family:'Liberation Mono', monospace;font-size:30.700px;line-height:30.700px;font-weight:400;color:#15151f;white-space:pre;transform:scale(1.0,1.07);transform-origin:0 23.52px;">/home/mobaxterm/my_files</div>
<div style="position:absolute;left:2269.68px;top:413.11px;font-family:'Liberation Mono', monospace;font-size:30.700px;line-height:30.700px;font-weight:400;color:#15151f;white-space:pre;transform:scale(1.0,1.07);transform-origin:0 23.52px;">16/08/2021</div>
<div style="position:absolute;left:2564.40px;top:413.11px;font-family:'Liberation Mono', monospace;font-size:30.700px;line-height:30.700px;font-weight:400;color:#15151f;white-space:pre;transform:scale(1.0,1.07);transform-origin:0 23.52px;">22:03.36</div>
<div style="position:absolute;left:2767.02px;top:413.11px;font-family:'Liberation Mono', monospace;font-size:30.700px;line-height:30.700px;font-weight:400;color:#f2f2f2;white-space:pre;transform:scale(1.0,1.07);transform-origin:0 23.52px;">tree</div>
<div style="position:absolute;left:2196.00px;top:448.82px;font-family:'Liberation Mono', monospace;font-size:30.700px;line-height:30.700px;font-weight:400;color:#f2f2f2;white-space:pre;transform:scale(1.0,1.07);transform-origin:0 23.52px;">.</div>
<div style="position:absolute;left:2196.00px;top:484.53px;font-family:'Liberation Mono', monospace;font-size:30.700px;line-height:30.700px;font-weight:400;color:#f2f2f2;white-space:pre;transform:scale(1.0,1.07);transform-origin:0 23.52px;">+--- code</div>
<div style="position:absolute;left:2196.00px;top:520.24px;font-family:'Liberation Mono', monospace;font-size:30.700px;line-height:30.700px;font-weight:400;color:#f2f2f2;white-space:pre;transform:scale(1.0,1.07);transform-origin:0 23.52px;">|   +--- java</div>
<div style="position:absolute;left:2196.00px;top:555.95px;font-family:'Liberation Mono', monospace;font-size:30.700px;line-height:30.700px;font-weight:400;color:#f2f2f2;white-space:pre;transform:scale(1.0,1.07);transform-origin:0 23.52px;">|   |   +--- HelloWorld.java</div>
<div style="position:absolute;left:2196.00px;top:591.66px;font-family:'Liberation Mono', monospace;font-size:30.700px;line-height:30.700px;font-weight:400;color:#f2f2f2;white-space:pre;transform:scale(1.0,1.07);transform-origin:0 23.52px;">+--- essays</div>
<div style="position:absolute;left:2196.00px;top:627.37px;font-family:'Liberation Mono', monospace;font-size:30.700px;line-height:30.700px;font-weight:400;color:#f2f2f2;white-space:pre;transform:scale(1.0,1.07);transform-origin:0 23.52px;">+--- notes</div>
<svg style="position:absolute;left:0;top:0" width="4253" height="1260" viewBox="0 0 4253 1260"><path d="M2196 728.8199999999999 H2730.1800000000003 L2749.1 746.675 L2730.1800000000003 764.53 H2196 Z" fill="#c4c014"/><path d="M2472.3 764.53 H2730.1800000000003 L2749.1 782.385 L2730.1800000000003 800.24 H2472.3 L2490.7200000000003 782.385 Z" fill="#14b26b"/><path d="M2196 764.53 H2472.3 L2490.7200000000003 782.385 L2472.3 800.24 H2196 Z" fill="#1796c0"/><g transform="translate(2217 733.42)" stroke="#15151f" stroke-width="1.9" fill="none" stroke-linejoin="round"><path d="M2.2 26.6 V3 Q2.2 1 4.2 1 H12.5 Q14 1 14.5 3 V5.5 H25 Q26.9 5.5 26.9 7.5 V13.5"/><path d="M2.2 26.8 L8 15 Q8.6 13.5 10.5 13.5 H31 Q33 13.5 32.4 15.5 L27.5 25.5 Q27 27 25 27 H3.5 Z"/></g><g transform="translate(2216 767.23)"><rect x="1" y="5" width="30" height="25" rx="1.8" fill="none" stroke="#1e1e1e" stroke-width="2"/><rect x="1" y="5" width="30" height="4.5" fill="#1e1e1e"/><path d="M8.5 9 V30 M16 9 V30 M23.5 9 V30 M1 16 H31 M1 23 H31" stroke="#1e1e1e" stroke-width="1.6"/><rect x="6" y="0.5" width="4.8" height="8" rx="2" fill="#1e1e1e"/><rect x="21.2" y="0.5" width="4.8" height="8" rx="2" fill="#1e1e1e"/><rect x="7.2" y="1.7" width="2.4" height="5.5" rx="1" fill="#1796c0"/><rect x="22.4" y="1.7" width="2.4" height="5.5" rx="1" fill="#1796c0"/><circle cx="19.6" cy="19.3" r="4.0" fill="#1e1e1e"/></g><g transform="translate(2525.9 782.03)"><circle r="12.8" fill="none" stroke="#1e1e1e" stroke-width="3.9"/><path d="M1.3 -6.8 V1.5 H-5" stroke="#1e1e1e" stroke-width="2.5" fill="none"/></g></svg>
<div style="position:absolute;left:2269.68px;top:734.50px;font-family:'Liberation Mono', monospace;font-size:30.700px;line-height:30.700px;font-weight:400;color:#15151f;white-space:pre;transform:scale(1.0,1.07);transform-origin:0 23.52px;">/home/mobaxterm/my_files</div>
<div style="position:absolute;left:2269.68px;top:770.21px;font-family:'Liberation Mono', monospace;font-size:30.700px;line-height:30.700px;font-weight:400;color:#15151f;white-space:pre;transform:scale(1.0,1.07);transform-origin:0 23.52px;">16/08/2021</div>
<div style="position:absolute;left:2564.40px;top:770.21px;font-family:'Liberation Mono', monospace;font-size:30.700px;line-height:30.700px;font-weight:400;color:#15151f;white-space:pre;transform:scale(1.0,1.07);transform-origin:0 23.52px;">22:03.40</div>
<div style="position:absolute;left:2767.02px;top:770.21px;font-family:'Liberation Mono', monospace;font-size:30.700px;line-height:30.700px;font-weight:400;color:#f2f2f2;white-space:pre;transform:scale(1.0,1.07);transform-origin:0 23.52px;">ls <span style="color:#29b6e2">-alh</span></div>
<div style="position:absolute;left:2196.00px;top:805.92px;font-family:'Liberation Mono', monospace;font-size:30.700px;line-height:30.700px;font-weight:400;color:#f2f2f2;white-space:pre;transform:scale(1.0,1.07);transform-origin:0 23.52px;">total 2</div>
<div style="position:absolute;left:2196.00px;top:841.63px;font-family:'Liberation Mono', monospace;font-size:30.700px;line-height:30.700px;font-weight:400;color:#f2f2f2;white-space:pre;transform:scale(1.0,1.07);transform-origin:0 23.52px;">drwxr-xr-x    1 mepcotte UsersGrp       0 Aug 16 22:01 <span style="color:#29b6e2">.</span></div>
<div style="position:absolute;left:2196.00px;top:877.34px;font-family:'Liberation Mono', monospace;font-size:30.700px;line-height:30.700px;font-weight:400;color:#f2f2f2;white-space:pre;transform:scale(1.0,1.07);transform-origin:0 23.52px;">drwxr-xr-x    1 mepcotte UsersGrp       0 Aug 16 22:03 <span style="color:#29b6e2">..</span></div>
<div style="position:absolute;left:2196.00px;top:913.05px;font-family:'Liberation Mono', monospace;font-size:30.700px;line-height:30.700px;font-weight:400;color:#f2f2f2;white-space:pre;transform:scale(1.0,1.07);transform-origin:0 23.52px;">drwxr-xr-x    1 mepcotte UsersGrp       0 Aug 16 22:01 <span style="color:#29b6e2">code</span></div>
<div style="position:absolute;left:2196.00px;top:948.76px;font-family:'Liberation Mono', monospace;font-size:30.700px;line-height:30.700px;font-weight:400;color:#f2f2f2;white-space:pre;transform:scale(1.0,1.07);transform-origin:0 23.52px;">drwxr-xr-x    1 mepcotte UsersGrp       0 Aug 16 22:01 <span style="color:#29b6e2">essays</span></div>
<div style="position:absolute;left:2196.00px;top:984.47px;font-family:'Liberation Mono', monospace;font-size:30.700px;line-height:30.700px;font-weight:400;color:#f2f2f2;white-space:pre;transform:scale(1.0,1.07);transform-origin:0 23.52px;">drwxr-xr-x    1 mepcotte UsersGrp       0 Aug 16 22:01 <span style="color:#29b6e2">notes</span></div>
<svg style="position:absolute;left:0;top:0" width="4253" height="1260" viewBox="0 0 4253 1260"><path d="M2196 1085.92 H2730.1800000000003 L2749.1 1103.775 L2730.1800000000003 1121.63 H2196 Z" fill="#c4c014"/><path d="M2472.3 1121.63 H2730.1800000000003 L2749.1 1139.4850000000001 L2730.1800000000003 1157.34 H2472.3 L2490.7200000000003 1139.4850000000001 Z" fill="#14b26b"/><path d="M2196 1121.63 H2472.3 L2490.7200000000003 1139.4850000000001 L2472.3 1157.34 H2196 Z" fill="#1796c0"/><g transform="translate(2217 1090.52)" stroke="#15151f" stroke-width="1.9" fill="none" stroke-linejoin="round"><path d="M2.2 26.6 V3 Q2.2 1 4.2 1 H12.5 Q14 1 14.5 3 V5.5 H25 Q26.9 5.5 26.9 7.5 V13.5"/><path d="M2.2 26.8 L8 15 Q8.6 13.5 10.5 13.5 H31 Q33 13.5 32.4 15.5 L27.5 25.5 Q27 27 25 27 H3.5 Z"/></g><g transform="translate(2216 1124.3300000000002)"><rect x="1" y="5" width="30" height="25" rx="1.8" fill="none" stroke="#1e1e1e" stroke-width="2"/><rect x="1" y="5" width="30" height="4.5" fill="#1e1e1e"/><path d="M8.5 9 V30 M16 9 V30 M23.5 9 V30 M1 16 H31 M1 23 H31" stroke="#1e1e1e" stroke-width="1.6"/><rect x="6" y="0.5" width="4.8" height="8" rx="2" fill="#1e1e1e"/><rect x="21.2" y="0.5" width="4.8" height="8" rx="2" fill="#1e1e1e"/><rect x="7.2" y="1.7" width="2.4" height="5.5" rx="1" fill="#1796c0"/><rect x="22.4" y="1.7" width="2.4" height="5.5" rx="1" fill="#1796c0"/><circle cx="19.6" cy="19.3" r="4.0" fill="#1e1e1e"/></g><g transform="translate(2525.9 1139.13)"><circle r="12.8" fill="none" stroke="#1e1e1e" stroke-width="3.9"/><path d="M1.3 -6.8 V1.5 H-5" stroke="#1e1e1e" stroke-width="2.5" fill="none"/></g></svg>
<div style="position:absolute;left:2269.68px;top:1091.60px;font-family:'Liberation Mono', monospace;font-size:30.700px;line-height:30.700px;font-weight:400;color:#15151f;white-space:pre;transform:scale(1.0,1.07);transform-origin:0 23.52px;">/home/mobaxterm/my_files</div>
<div style="position:absolute;left:2269.68px;top:1127.31px;font-family:'Liberation Mono', monospace;font-size:30.700px;line-height:30.700px;font-weight:400;color:#15151f;white-space:pre;transform:scale(1.0,1.07);transform-origin:0 23.52px;">16/08/2021</div>
<div style="position:absolute;left:2564.40px;top:1127.31px;font-family:'Liberation Mono', monospace;font-size:30.700px;line-height:30.700px;font-weight:400;color:#15151f;white-space:pre;transform:scale(1.0,1.07);transform-origin:0 23.52px;">22:03.44</div>
<div style="position:absolute;left:2767.52px;top:1121.63px;width:19.00px;height:35.21px;background:#b4b4c0;"></div>
<div style="position:absolute;left:2141.00px;top:1179.85px;font-family:'Liberation Sans', sans-serif;font-size:24.400px;line-height:24.400px;font-weight:700;color:#000;white-space:pre;">UNREGISTERED VERSION</div>
<div style="position:absolute;left:2469.50px;top:1179.85px;font-family:'Liberation Sans', sans-serif;font-size:24.400px;line-height:24.400px;font-weight:400;color:#000;white-space:pre;">-</div>
<div style="position:absolute;left:2495.00px;top:1179.85px;font-family:'Liberation Sans', sans-serif;font-size:24.400px;line-height:24.400px;font-weight:400;color:#000;white-space:pre;">Please support MobaXterm by subscribing to the professional edition here:</div>
<div style="position:absolute;left:3315.50px;top:1179.55px;font-family:'Liberation Sans', sans-serif;font-size:24.750px;line-height:24.750px;font-weight:400;color:#0000ee;white-space:pre;">https://mobaxterm.mobatek.net</div>
</body></html>
